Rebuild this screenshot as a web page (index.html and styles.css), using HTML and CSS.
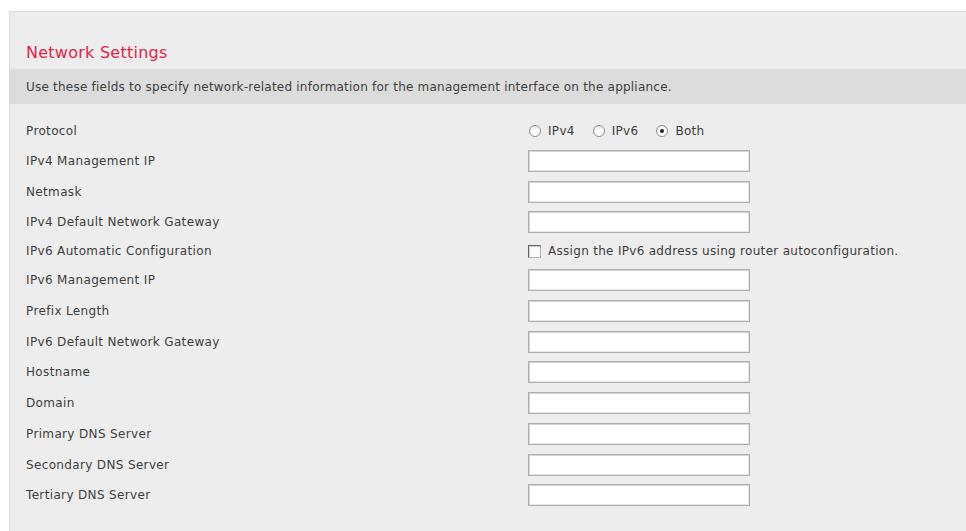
FILE: index.html
```html
<!DOCTYPE html>
<html lang="en">
<head>
<meta charset="utf-8">
<title>Network Settings</title>
<link rel="stylesheet" href="styles.css">
</head>
<body>
<div class="panel">
  <h2 class="panel-title">Network Settings</h2>
  <div class="panel-desc">Use these fields to specify network-related information for the management interface on the appliance.</div>
  <form class="settings">
    <div class="row row-proto">
      <label class="field-label">Protocol</label>
      <div class="field">
        <label class="opt"><input type="radio" name="proto" class="radio"> IPv4</label>
        <label class="opt"><input type="radio" name="proto" class="radio"> IPv6</label>
        <label class="opt"><input type="radio" name="proto" class="radio" checked> Both</label>
      </div>
    </div>
    <div class="row">
      <label class="field-label">IPv4 Management IP</label>
      <div class="field"><input type="text" class="text-input"></div>
    </div>
    <div class="row">
      <label class="field-label">Netmask</label>
      <div class="field"><input type="text" class="text-input"></div>
    </div>
    <div class="row">
      <label class="field-label">IPv4 Default Network Gateway</label>
      <div class="field"><input type="text" class="text-input"></div>
    </div>
    <div class="row row-check">
      <label class="field-label">IPv6 Automatic Configuration</label>
      <div class="field">
        <label class="opt"><input type="checkbox" class="check"> Assign the IPv6 address using router autoconfiguration.</label>
      </div>
    </div>
    <div class="row">
      <label class="field-label">IPv6 Management IP</label>
      <div class="field"><input type="text" class="text-input"></div>
    </div>
    <div class="row">
      <label class="field-label">Prefix Length</label>
      <div class="field"><input type="text" class="text-input"></div>
    </div>
    <div class="row">
      <label class="field-label">IPv6 Default Network Gateway</label>
      <div class="field"><input type="text" class="text-input"></div>
    </div>
    <div class="row">
      <label class="field-label">Hostname</label>
      <div class="field"><input type="text" class="text-input"></div>
    </div>
    <div class="row">
      <label class="field-label">Domain</label>
      <div class="field"><input type="text" class="text-input"></div>
    </div>
    <div class="row">
      <label class="field-label">Primary DNS Server</label>
      <div class="field"><input type="text" class="text-input"></div>
    </div>
    <div class="row">
      <label class="field-label">Secondary DNS Server</label>
      <div class="field"><input type="text" class="text-input"></div>
    </div>
    <div class="row">
      <label class="field-label">Tertiary DNS Server</label>
      <div class="field"><input type="text" class="text-input"></div>
    </div>
  </form>
</div>
</body>
</html>
```
FILE: styles.css
```css
html, body {
  margin: 0;
  padding: 0;
  background: #ffffff;
}

body {
  padding: 11px 0 0 9px;
  font-family: "DejaVu Sans", Verdana, sans-serif;
  font-size: 12px;
  letter-spacing: 0.3px;
  color: #3d3d3d;
  overflow: hidden;
}

.panel {
  background: #ededed;
  border-top: 1px solid #dcdcdc;
  border-left: 1px solid #dcdcdc;
  min-height: 540px;
}

.panel-title {
  margin: 0;
  padding: 31px 0 0 16px;
  height: 26px;
  font-size: 16px;
  letter-spacing: 0.25px;
  font-weight: normal;
  color: #e2234b;
  line-height: 20px;
}

.panel-desc {
  background: #dcdcdc;
  height: 35px;
  line-height: 36px;
  padding-left: 16px;
  letter-spacing: 0.22px;
}

.settings {
  padding-top: 13px;
}

.row {
  display: grid;
  grid-template-columns: 502px 1fr;
  align-items: center;
  height: 30.75px;
  padding-left: 16px;
}

.row-proto {
  height: 28.5px;
}

.row-check {
  height: 27px;
}

.field-label {
  letter-spacing: 0.35px;
}

.field {
  display: flex;
  align-items: center;
}

.opt {
  display: inline-flex;
  align-items: center;
  margin-right: 17px;
}

.text-input {
  box-sizing: border-box;
  width: 222px;
  height: 22px;
  margin: 0;
  background: #ffffff;
  border: 1px solid #aeaeae;
  box-shadow: inset 1px 1px 0 #d4d4d4, inset -1px -1px 0 #e6e6e6;
  font: inherit;
}

.radio {
  appearance: none;
  -webkit-appearance: none;
  box-sizing: border-box;
  width: 12px;
  height: 12px;
  margin: 0 7px 0 1px;
  border-radius: 50%;
  border: 1px solid #8c8c8c;
  background: radial-gradient(circle at 60% 60%, #ffffff 45%, #e4e4e4 100%);
  position: relative;
}

.radio:checked::after {
  content: "";
  position: absolute;
  left: 3px;
  top: 3px;
  width: 4px;
  height: 4px;
  border-radius: 50%;
  background: #222222;
}

.check {
  appearance: none;
  -webkit-appearance: none;
  box-sizing: border-box;
  width: 13px;
  height: 13px;
  margin: 0 7px 0 0;
  border: 1px solid #666666;
  border-right-color: #b0b0b0;
  border-bottom-color: #b0b0b0;
  background: #fafafa;
  box-shadow: inset 1px 1px 0 #cfcfcf;
}
```
